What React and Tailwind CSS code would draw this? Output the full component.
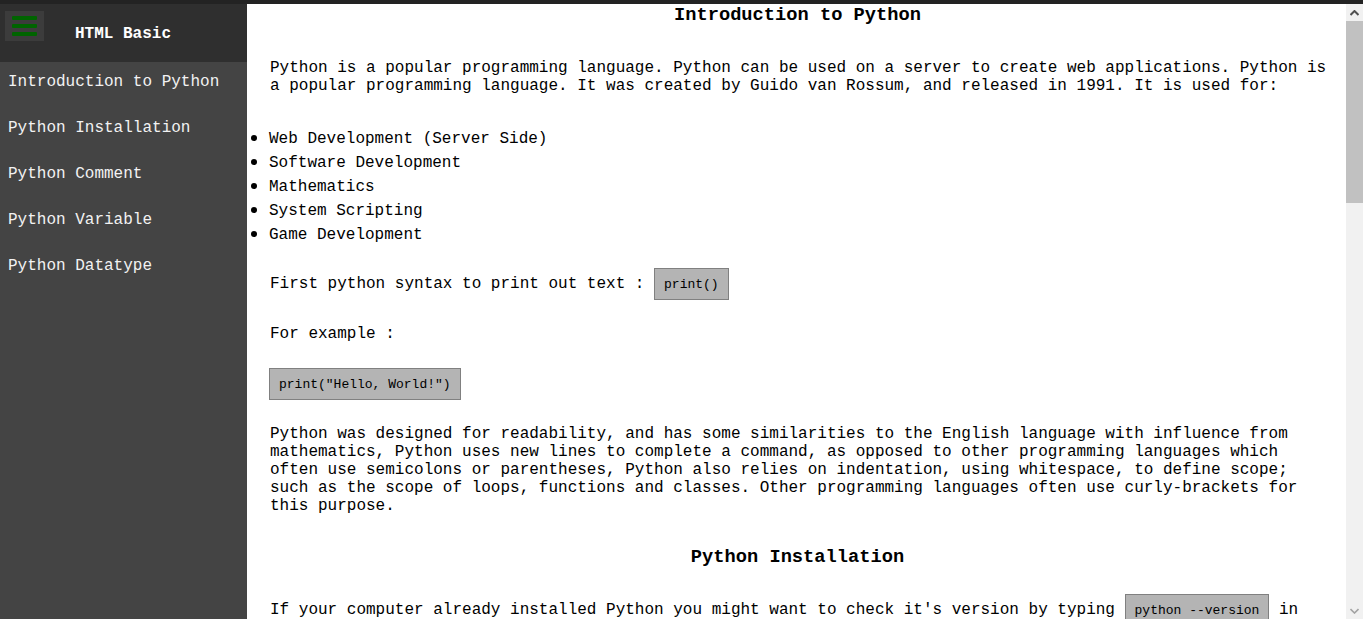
const menu = [
  'Introduction to Python',
  'Python Installation',
  'Python Comment',
  'Python Variable',
  'Python Datatype',
]

const uses = [
  'Web Development (Server Side)',
  'Software Development',
  'Mathematics',
  'System Scripting',
  'Game Development',
]

const Code = ({ children }) => (
  <code className="inline-flex h-[32px] items-center border border-[#808080] bg-[#b4b4b4] px-[9px] align-middle font-['Liberation_Mono',monospace] text-[13px] leading-none text-black">
    {children}
  </code>
)

const Heading = ({ children, className = '' }) => (
  <h3 className={`pr-[4px] text-center text-[18.72px] font-bold leading-[21px] ${className}`}>
    {children}
  </h3>
)

// fake classic scrollbar, the headless page draws none
const Scrollbar = () => (
  <div className="flex w-[17px] shrink-0 flex-col bg-[#f1f1f1]">
    <div className="flex h-[17px] items-center justify-center">
      <svg width="9" height="6" viewBox="0 0 9 6">
        <path d="M0.5 5 L4.5 1 L8.5 5" fill="none" stroke="#505050" strokeWidth="2" />
      </svg>
    </div>
    <div className="h-[182px] bg-[#c1c1c1]" />
    <div className="flex-1" />
    <div className="flex h-[17px] items-center justify-center">
      <svg width="9" height="6" viewBox="0 0 9 6">
        <path d="M0.5 1 L4.5 5 L8.5 1" fill="none" stroke="#a3a3a3" strokeWidth="1.6" />
      </svg>
    </div>
  </div>
)

export default function App() {
  return (
    <div className="flex h-screen w-full flex-col overflow-hidden bg-[#232323] font-['Liberation_Mono','Courier_New',monospace] text-[16px] leading-[18px]">
      <div className="h-[4px] shrink-0" />
      <div className="flex min-h-0 flex-1">
        <aside className="flex w-[247px] shrink-0 flex-col bg-[#444444] text-[#f2f2f2]">
          <div className="flex h-[58px] shrink-0 items-start bg-[#2f2f2f]">
            <div className="ml-[5px] mt-[7px] flex h-[30px] w-[39px] flex-col items-center justify-center gap-[4px] bg-[#3c3c3c]">
              <span className="h-[4px] w-[25px] rounded-[1px] bg-[#006400]" />
              <span className="h-[4px] w-[25px] rounded-[1px] bg-[#006400]" />
              <span className="h-[4px] w-[25px] rounded-[1px] bg-[#006400]" />
            </div>
            <div className="ml-[31px] mt-[21px] font-bold text-white">HTML Basic</div>
          </div>
          <nav className="flex flex-col">
            {menu.map((m) => (
              <div key={m} className="h-[46px] pl-[8px] pt-[11px]">
                {m}
              </div>
            ))}
          </nav>
        </aside>

        <main className="min-w-0 flex-1 overflow-hidden bg-white pl-[22px] pr-[16px] pt-[1px] text-black">
          <Heading>Introduction to Python</Heading>
          <p className="mt-[33px] pl-px">
            Python is a popular programming language. Python can be used on a server to create web
            applications. Python is a popular programming language. It was created by Guido van
            Rossum, and released in 1991. It is used for:
          </p>
          <ul className="mt-[31px] list-disc pl-0 marker:text-[20px]">
            {uses.map((u) => (
              <li key={u} className="h-[24px] py-[3px]">
                {u}
              </li>
            ))}
          </ul>
          <p className="mt-[22px] pl-px leading-[32px]">
            First python syntax to print out text : <Code>print()</Code>
          </p>
          <p className="mt-[25px] pl-px">For example :</p>
          <div className="mt-[25px]">
            <Code>print("Hello, World!")</Code>
          </div>
          <p className="mt-[25px] pl-px">
            Python was designed for readability, and has some similarities to the English language
            with influence from mathematics, Python uses new lines to complete a command, as opposed
            to other programming languages which often use semicolons or parentheses, Python also
            relies on indentation, using whitespace, to define scope; such as the scope of loops,
            functions and classes. Other programming languages often use curly-brackets for this
            purpose.
          </p>
          <Heading className="mt-[32px]">Python Installation</Heading>
          <p className="mt-[26px] pl-px leading-[32px]">
            If your computer already installed Python you might want to check it's version by
            typing <Code>python --version</Code> in your command line or terminal. If Python is not
            installed, you can download it for free from the official Python website.
          </p>
          <Heading className="mt-[32px]">Python Comment</Heading>
          <p className="mt-[26px] pl-px">
            Comments can be used to explain Python code, to make the code more readable, and to
            prevent execution when testing code. Comments start with a #, and Python will ignore
            them.
          </p>
        </main>
        <Scrollbar />
      </div>
    </div>
  )
}
